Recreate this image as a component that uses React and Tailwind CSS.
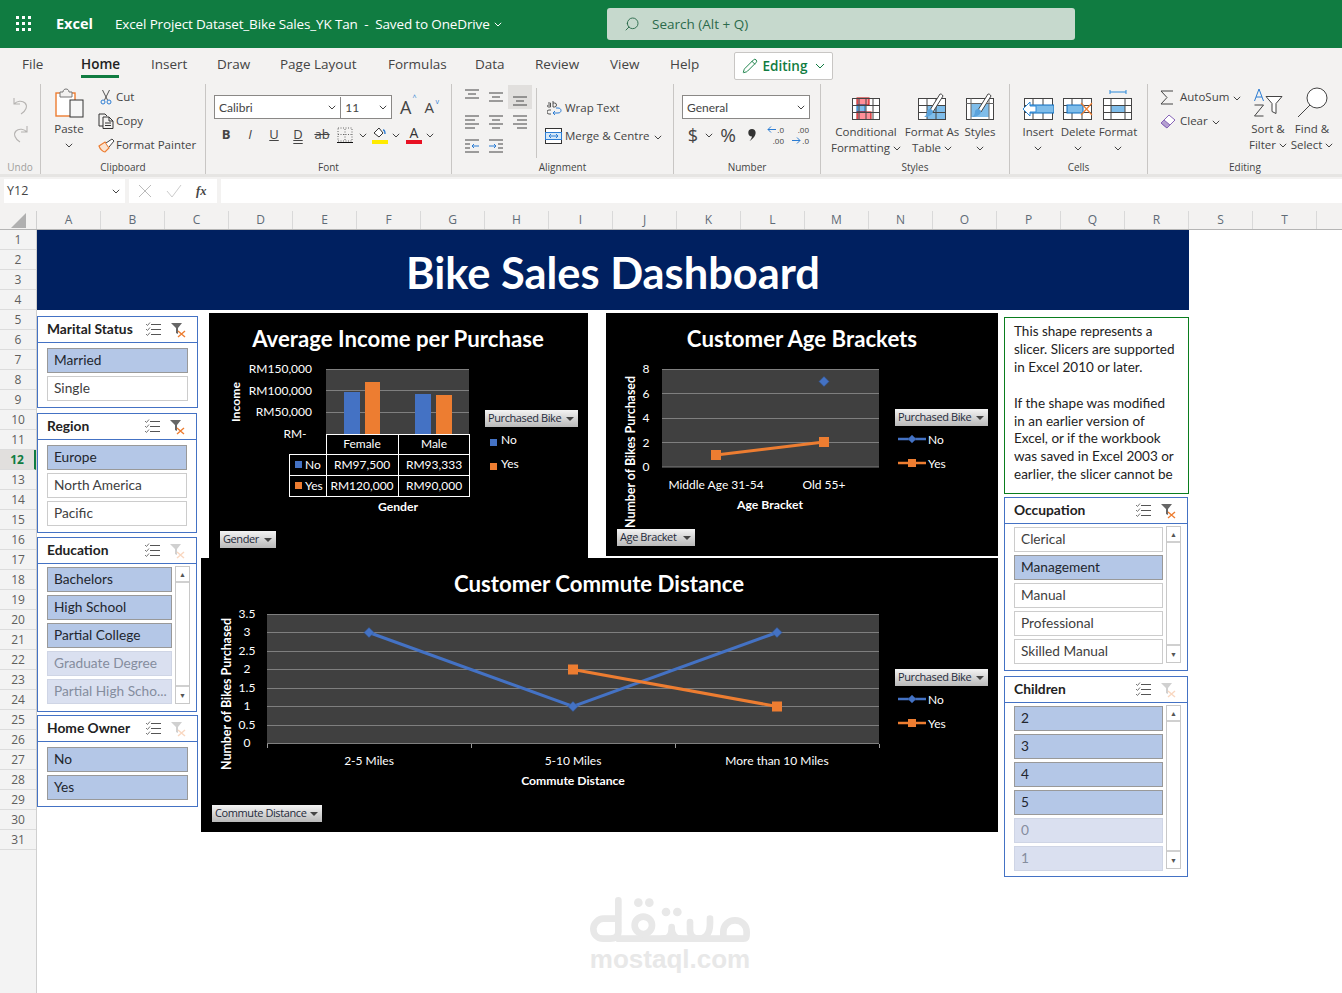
import { Search, Pencil } from "lucide-react";

const Chev = ({ c = "#444" }) => (
  <svg width="8" height="5" viewBox="0 0 8 5" className="inline-block shrink-0">
    <path d="M.8.8 4 4 7.2.8" fill="none" stroke={c} strokeWidth="1" />
  </svg>
);

const Lines = ({ rows }) => (
  <svg width="16" height="14" viewBox="0 0 16 14">
    {rows.map((r, i) => (
      <path key={i} d={`M${r[0]} ${r[2]}H${r[1]}`} stroke="#444" strokeWidth="1" />
    ))}
  </svg>
);

const UndoIcon = ({ flip }) => (
  <svg width="17" height="18" viewBox="0 0 17 18" className={flip ? "-scale-x-100" : ""}>
    <path d="M2 1v6h6M2 7c3-3 8-4 11-1 3 3 1 8-4 11" fill="none" stroke="#b5b3b1" strokeWidth="1.1" />
  </svg>
);

const PasteIcon = () => (
  <svg width="29" height="30" viewBox="0 0 29 30">
    <rect x="1" y="5" width="19" height="23" fill="#fff" stroke="#ed7d31" strokeWidth="1.4" />
    <path d="M5 9V4h3c0-4 6-4 6 0h3v5z" fill="#f3f2f1" stroke="#777" />
    <rect x="15" y="12" width="13" height="17" fill="#f7f7f7" stroke="#333" />
  </svg>
);

const CutIcon = () => (
  <svg width="12" height="16" viewBox="0 0 12 16">
    <path d="M2.5 1l5 10M9.5 1l-5 10" stroke="#555" fill="none" />
    <circle cx="3" cy="13" r="2" fill="none" stroke="#2b7cd3" />
    <circle cx="9" cy="13" r="2" fill="none" stroke="#2b7cd3" />
  </svg>
);

const CopyIcon = () => (
  <svg width="16" height="16" viewBox="0 0 16 16">
    <path d="M5 13H1V1h6l2 2M5 4h6l4 4v7.5H5zM11 4v4h4M7 10h6M7 12.5h6" fill="none" stroke="#333" />
  </svg>
);

const PainterIcon = () => (
  <svg width="17" height="15" viewBox="0 0 17 15">
    <path d="M1 8l6-4 4 6-4 4c-2 0-5-3-6-6z" fill="#fbe3d0" stroke="#ed7d31" strokeWidth="1.2" />
    <path d="M8 5l6-4 2 2-5 6" fill="#fff" stroke="#444" />
  </svg>
);

const FillIcon = () => (
  <svg width="16" height="18" viewBox="0 0 16 18">
    <path d="M2 7l5-5 4 5-4 4z" fill="#fff" stroke="#333" />
    <path d="M11 4c2 0 2 2 2 4" fill="none" stroke="#2b7cd3" strokeWidth="1.4" />
    <rect y="14" width="16" height="4" fill="#ffeb00" />
  </svg>
);

const FontColor = () => (
  <div className="flex flex-col items-center w-4">
    <span className="text-[14px] leading-[14px] text-[#333]">A</span>
    <span className="w-4 h-1 bg-[#e81123]" />
  </div>
);

const BorderIcon = () => (
  <svg width="16" height="16" viewBox="0 0 16 16">
    <rect x="1" y="1" width="14" height="13" fill="none" stroke="#666" strokeDasharray="1 1.5" />
    <path d="M8 2v12M1 7.5h14" stroke="#666" strokeDasharray="1 1.5" />
    <path d="M0 15.5h16" stroke="#111" />
  </svg>
);

const WrapIcon = () => (
  <svg width="15" height="16" viewBox="0 0 15 16" className="shrink-0">
    <path d="M1 3h2.5v4H1.5a1 1 0 0 1 0-2h2M6 1v6h1.5a1.6 1.6 0 0 0 0-4H6M4 10H2a2 2 0 0 0 0 4h2" fill="none" stroke="#444" strokeWidth=".9" />
    <path d="M6 13h5c4 0 4-5 0-5H9M8 11l-2 2 2 2" fill="none" stroke="#2b7cd3" />
  </svg>
);

const MergeIcon = () => (
  <svg width="17" height="16" viewBox="0 0 17 16">
    <rect x=".5" y=".5" width="16" height="15" fill="#fff" stroke="#333" />
    <rect x=".5" y="4.5" width="16" height="7" fill="#d5e8f8" stroke="#2b7cd3" />
    <path d="M4 8h9M6 6 4 8l2 2M11 6l2 2-2 2" fill="none" stroke="#2b7cd3" />
  </svg>
);

const GridBase = ({ children, x = 0, w = 28, h = 22, cols = 4 }) => (
  <svg width={w + 8} height={h + 12} viewBox={`-4 -10 ${w + 8} ${h + 12}`}>
    <rect x={x + 0.5} y=".5" width={w - 1} height={h - 1} fill="#fff" />
    {children}
    <rect x={x + 0.5} y=".5" width={w - 1} height={h - 1} fill="none" stroke="#444" />
    {Array.from({ length: cols - 1 }).map((_, i) => (
      <path key={i} d={`M${x + ((i + 1) * w) / cols} 0V${h}`} stroke="#444" />
    ))}
    <path d={`M${x} 7.5H${x + w}M${x} 14.5H${x + w}`} stroke="#444" />
  </svg>
);

const CondIcon = () => (
  <GridBase>
    <rect x="5" y="0" width="12" height="7" fill="#ff8f98" stroke="#c00000" />
    <rect x="5" y="7" width="8" height="7" fill="#7fbdea" stroke="#0f6cbd" />
    <rect x="5" y="14" width="14" height="7.5" fill="#ff8f98" stroke="#c00000" />
  </GridBase>
);

const Brush = ({ x = 17 }) => (
  <g transform={`translate(${x} 0)`}>
    <path d="M14-4 4 12l3 2L17-2c-1-2-2-2-3-2z" fill="#fff" stroke="#444" />
    <path d="M1 13c2-3 5-2 6 0 0 4-5 6-9 6 2-1 3-3 3-6z" fill="#5ba3dc" />
  </g>
);

const TableIcon = () => (
  <svg width="36" height="34" viewBox="-4 -10 36 34">
    <rect x=".5" y=".5" width="27" height="21" fill="#fff" />
    <rect x="9" y="7" width="18" height="14" fill="#7fbdea" />
    <rect x=".5" y=".5" width="27" height="21" fill="none" stroke="#444" />
    <path d="M9 0v22M18 0v22M0 7.5h28M0 14.5h28" stroke="#444" />
    <Brush x={8} />
  </svg>
);

const StyleIcon = () => (
  <svg width="36" height="34" viewBox="-4 -10 36 34">
    <rect x=".5" y=".5" width="27" height="21" fill="#fff" />
    <rect x="5" y="5" width="18" height="14" fill="#7fbdea" />
    <rect x=".5" y=".5" width="27" height="21" fill="none" stroke="#444" />
    <path d="M0 5.5h28M5 0v22M23 0v22" stroke="#666" />
    <Brush x={8} />
  </svg>
);

const InsertIcon = () => (
  <svg width="32" height="34" viewBox="0 -10 32 34">
    <rect x="2.5" y=".5" width="28" height="21" fill="#fff" stroke="#444" />
    <path d="M11 0v22M21 0v22M2 7.5h29M2 14.5h29" stroke="#444" />
    <rect x="8" y="7" width="24" height="8" fill="#7fbdea" stroke="#0f6cbd" />
    <path d="M8 4 1 11l7 7v-4h6V8H8z" fill="#fff" stroke="#2b88d8" />
  </svg>
);

const DeleteIcon = () => (
  <svg width="30" height="34" viewBox="0 -10 30 34">
    <rect x=".5" y=".5" width="28" height="21" fill="#fff" stroke="#444" />
    <path d="M9 0v22M19 0v22M0 7.5h29M0 14.5h29" stroke="#444" />
    <rect x="4" y="7" width="16" height="8" fill="#7fbdea" stroke="#0f6cbd" />
    <path d="M18 5l11 12M29 5 18 17" stroke="#ed7d31" strokeWidth="1.2" />
  </svg>
);

const FormatIcon = () => (
  <svg width="30" height="34" viewBox="0 -10 30 34">
    <path d="M7-6h16M7-8v4M23-8v4" stroke="#2b88d8" />
    <rect x=".5" y=".5" width="28" height="21" fill="#fff" stroke="#444" />
    <rect x="8" y="7" width="14" height="8" fill="#7fbdea" />
    <path d="M8 0v22M22 0v22M0 7.5h29M0 14.5h29" stroke="#444" />
  </svg>
);

const SumIcon = () => (
  <svg width="14" height="15" viewBox="0 0 14 15">
    <path d="M13 1H1l6 6.5L1 14h12" fill="none" stroke="#444" />
  </svg>
);

const EraserIcon = () => (
  <svg width="16" height="16" viewBox="0 0 16 16">
    <path d="M1 10 9 2l6 5-8 8z" fill="#fff" stroke="#8764b8" />
    <path d="M1 10l3-3 6 5-3 3z" fill="#b4a0d0" stroke="#8764b8" />
  </svg>
);

const SortIcon = () => (
  <svg width="30" height="30" viewBox="0 0 30 30">
    <path d="M1.5 13 6 1l4.5 12M3 9h6" fill="none" stroke="#2b7cd3" />
    <path d="M1.5 17h9l-9 11h9" fill="none" stroke="#444" />
    <path d="M13 8.5h16l-6 7v10l-4-2v-8z" fill="#fff" stroke="#444" />
  </svg>
);

const FindIcon = () => (
  <svg width="31" height="31" viewBox="0 0 31 31">
    <circle cx="20" cy="11" r="10" fill="#fff" stroke="#444" />
    <path d="M13 18 1 30" stroke="#444" />
  </svg>
);

const DecArrow = ({ flip }) => (
  <svg width="9" height="7" viewBox="0 0 9 7" className={flip ? "-scale-x-100 shrink-0" : "shrink-0"}>
    <path d="M9 3.5H1M4 .5l-3 3 3 3" fill="none" stroke="#2b7cd3" />
  </svg>
);

const Combo = ({ w, text, cls = "" }) => (
  <div className={`flex items-center justify-between pl-1 pr-1 h-full ${w} ${cls}`}>
    <span>{text}</span>
    <Chev />
  </div>
);

const Group = ({ w, label, children, muted, last }) => (
  <div className={`flex flex-col h-[90px] shrink-0 ${w} ${last ? "" : "border-r border-[#c8c6c4]"}`}>
    <div className="flex-1 flex min-h-0">{children}</div>
    <div className={`h-[14px] leading-[14px] text-center text-[10px] ${muted ? "text-[#a19f9d]" : "text-[#444]"}`}>{label}</div>
  </div>
);

const Large = ({ w, h, icon, lines, chev }) => (
  <div className={`flex flex-col items-center text-[#444] ${w}`}>
    <div className={`flex items-center justify-center ${h}`}>{icon}</div>
    {lines.map((l, i) => (
      <div key={i} className="h-4 leading-4 flex items-center gap-[3px] whitespace-nowrap">
        {l}
        {chev === i && <Chev />}
      </div>
    ))}
    {chev === lines.length && <div className="h-4 flex items-center"><Chev /></div>}
  </div>
);

const Ribbon = () => (
  <div className="flex h-[94px] pt-1 text-[11.5px] text-[#444]">
    <Group w="w-[41px]" label="Undo" muted>
      <div className="w-full flex flex-col items-center pt-[13px] gap-[10px]">
        <UndoIcon />
        <UndoIcon flip />
      </div>
    </Group>

    <Group w="w-[165px]" label="Clipboard">
      <div className="ml-[9px] w-[38px]">
        <Large w="w-full" h="h-[37px]" icon={<PasteIcon />} lines={["Paste"]} chev={1} />
      </div>
      <div className="ml-[8px] pt-[1px] flex flex-col">
        <div className="h-6 flex items-center"><div className="w-5 flex justify-center"><CutIcon /></div>Cut</div>
        <div className="h-6 flex items-center"><div className="w-5 flex justify-center"><CopyIcon /></div>Copy</div>
        <div className="h-6 flex items-center"><div className="w-5 flex justify-center"><PainterIcon /></div>Format Painter</div>
      </div>
    </Group>

    <Group w="w-[246px]" label="Font">
      <div className="pl-2 pt-[11px] flex flex-col">
        <div className="flex items-center h-6">
          <div className="flex h-6 w-[178px] bg-white border border-[#8a8886] font-[Lato,sans-serif] text-[12px] pt-[1px]">
            <Combo w="w-[127px]" text="Calibri" cls="border-r border-[#8a8886]" />
            <Combo w="w-[50px]" text="11" />
          </div>
          <span className="ml-2 text-[18px] relative">A<span className="absolute -top-[1px] -right-[5px] text-[7px] text-[#2b7cd3]">^</span></span>
          <span className="ml-[13px] text-[15px] relative">A<span className="absolute top-[1px] -right-[5px] text-[7px] text-[#2b7cd3]">v</span></span>
        </div>
        <div className="flex items-center h-[22px] mt-[5px] text-[13px]">
          <span className="w-6 text-center font-bold">B</span>
          <span className="w-6 text-center italic">I</span>
          <span className="w-6 text-center underline">U</span>
          <span className="w-6 text-center underline decoration-double">D</span>
          <span className="w-6 text-center line-through">ab</span>
          <span className="w-[22px] flex justify-center"><BorderIcon /></span>
          <span className="w-[14px] flex justify-center"><Chev /></span>
          <span className="w-5 flex justify-center"><FillIcon /></span>
          <span className="w-3 flex justify-center"><Chev /></span>
          <span className="w-6 flex justify-center"><FontColor /></span>
          <span className="w-2 flex justify-center"><Chev /></span>
        </div>
      </div>
    </Group>

    <Group w="w-[222px]" label="Alignment">
      <div className="ml-2 pt-[1px] grid grid-cols-[24px_24px_24px] grid-rows-[24px_25px_24px] h-[73px]">
        <div className="flex justify-center pt-[4px]"><Lines rows={[[1, 15, 1], [4, 12, 5], [1, 15, 9]]} /></div>
        <div className="flex justify-center pt-[7px]"><Lines rows={[[1, 15, 1], [4, 12, 5], [1, 15, 9]]} /></div>
        <div className="flex justify-center pt-[11px] bg-[#e1dfdd]"><Lines rows={[[1, 15, 1], [4, 12, 5], [1, 15, 9]]} /></div>
        <div className="flex justify-center pt-[6px]"><Lines rows={[[1, 15, 1], [1, 11, 5], [1, 15, 9], [1, 11, 13]]} /></div>
        <div className="flex justify-center pt-[6px]"><Lines rows={[[1, 15, 1], [4, 12, 5], [1, 15, 9], [4, 12, 13]]} /></div>
        <div className="flex justify-center pt-[6px]"><Lines rows={[[1, 15, 1], [5, 15, 5], [1, 15, 9], [5, 15, 13]]} /></div>
        <div className="flex justify-center pt-[5px]">
          <svg width="16" height="14" viewBox="0 0 16 14"><path d="M1 1h14M1 5h5M1 9h5M1 13h14" stroke="#444" /><path d="M15 7H8M10 5 8 7l2 2" fill="none" stroke="#2b7cd3" /></svg>
        </div>
        <div className="flex justify-center pt-[5px]">
          <svg width="16" height="14" viewBox="0 0 16 14"><path d="M1 1h14M10 5h5M10 9h5M1 13h14" stroke="#444" /><path d="M1 7h7M6 5l2 2-2 2" fill="none" stroke="#2b7cd3" /></svg>
        </div>
      </div>
      <div className="ml-1 mt-1 w-px h-[70px] bg-[#c8c6c4]" />
      <div className="ml-2 pt-3 flex flex-col gap-1">
        <div className="h-6 flex items-center pl-[2px] gap-[3px]"><WrapIcon />Wrap Text</div>
        <div className="h-6 flex items-center gap-[3px]"><MergeIcon />Merge &amp; Centre<span className="ml-[1px]"><Chev /></span></div>
      </div>
    </Group>

    <Group w="w-[147px]" label="Number">
      <div className="pl-2 pt-[11px] flex flex-col">
        <div className="h-6 w-[128px] bg-white border border-[#8a8886] font-[Lato,sans-serif] text-[12px] pt-[1px]">
          <Combo w="w-full" text="General" />
        </div>
        <div className="flex items-center h-[22px] mt-[5px]">
          <span className="w-[22px] text-center text-[18px]">$</span>
          <span className="w-[10px] flex justify-center"><Chev /></span>
          <span className="w-7 text-center text-[19px]">%</span>
          <span className="w-5 flex justify-center">
            <svg width="8" height="12" viewBox="0 0 8 12"><path d="M4 0a3.6 3.6 0 0 1 3.6 3.8C7.6 7 5 10 1.5 12 3.5 9.5 4 8 4 7.4A3.7 3.7 0 0 1 4 0z" fill="#333" /></svg>
          </span>
          <div className="ml-[1px] w-6 flex flex-col items-end text-[8px] leading-[11px] pr-[3px]">
            <div className="flex items-center gap-[1px]"><DecArrow /><span>.0</span></div>
            <span>.00</span>
          </div>
          <div className="ml-[1px] w-6 flex flex-col items-end text-[8px] leading-[11px] pr-[3px]">
            <span>.00</span>
            <div className="flex items-center gap-[1px]"><DecArrow flip /><span>.0</span></div>
          </div>
        </div>
      </div>
    </Group>

    <Group w="w-[189px]" label="Styles">
      <div className="pl-[9px] pt-[2px] flex">
        <Large w="w-[72px]" h="h-[38px]" icon={<CondIcon />} lines={["Conditional", "Formatting"]} chev={1} />
        <Large w="w-[60px]" h="h-[38px]" icon={<TableIcon />} lines={["Format As", "Table"]} chev={1} />
        <Large w="w-9" h="h-[38px]" icon={<StyleIcon />} lines={["Styles"]} chev={1} />
      </div>
    </Group>

    <Group w="w-[138px]" label="Cells">
      <div className="pl-2 pt-[2px] flex">
        <Large w="w-10" h="h-[38px]" icon={<InsertIcon />} lines={["Insert"]} chev={1} />
        <Large w="w-10" h="h-[38px]" icon={<DeleteIcon />} lines={["Delete"]} chev={1} />
        <Large w="w-10" h="h-[38px]" icon={<FormatIcon />} lines={["Format"]} chev={1} />
      </div>
    </Group>

    <Group w="flex-1" label="Editing" last>
      <div className="pl-3 flex">
        <div className="w-[86px] pt-[1px] flex flex-col">
          <div className="h-6 flex items-center"><div className="w-5"><SumIcon /></div>AutoSum<span className="ml-1"><Chev /></span></div>
          <div className="h-6 flex items-center"><div className="w-5"><EraserIcon /></div>Clear<span className="ml-1"><Chev /></span></div>
        </div>
        <Large w="w-11" h="h-[37px]" icon={<SortIcon />} lines={["Sort &", "Filter"]} chev={1} />
        <Large w="w-11" h="h-[37px]" icon={<FindIcon />} lines={["Find &", "Select"]} chev={1} />
      </div>
    </Group>
  </div>
);

const columns = "ABCDEFGHIJKLMNOPQRST".split("");
const rows = Array.from({ length: 31 }, (_, i) => i + 1);

const MultiSelect = () => (
  <svg width="16" height="15" viewBox="0 0 16 15">
    <path d="M6 2.5h10M6 7.5h10M6 12.5h10" stroke="#555" />
    <path d="M1 2l1.5 1.5L5 .5M1 7l1.5 1.5L5 5.5M1 12l1.5 1.5L5 10.5" fill="none" stroke="#777" />
  </svg>
);

const ClearFilter = ({ active }) => (
  <svg width="15" height="16" viewBox="0 0 15 16" className={active ? "" : "opacity-30"}>
    <path d="M0 1h11L7 6v6L5 11V6z" fill="#666" />
    <path d="M7 9l7 6M14 9l-7 6" stroke="#ed7d31" strokeWidth="1.4" />
  </svg>
);

const itemCls = {
  on: "bg-[#b4c7e7] border-[#999999] text-[#22262e]",
  off: "bg-white border-[#cccccc] text-[#404040]",
  dim: "bg-[#dae0f0] border-[#cfd5e5] text-[#858d9e]",
};

const Slicer = ({ title, items, size, itemW, scroll, active }) => (
  <div className={`flex flex-col bg-white border border-[#4472c4] overflow-hidden shrink-0 ${size}`}>
    <div className="flex items-center h-[26px] shrink-0 pl-[9px] border-b border-[#4472c4] font-[Lato,sans-serif] font-bold text-[13.8px] text-[#222]">
      <span className="flex-1">{title}</span>
      <MultiSelect />
      <span className="ml-[10px] mr-[11px] flex"><ClearFilter active={active} /></span>
    </div>
    <div className={`flex flex-1 min-h-0 pl-[9px] ${scroll ? "pt-[3px]" : "pt-[5px]"} font-[Lato,sans-serif] text-[13.7px]`}>
      <div className={`flex flex-col gap-[3px] shrink-0 ${itemW}`}>
        {items.map(([t, s]) => (
          <div key={t} className={`h-[25px] shrink-0 border pl-[6px] leading-[21px] whitespace-nowrap overflow-hidden ${itemCls[s]}`}>{t}</div>
        ))}
      </div>
      {scroll && (
        <div className="ml-[3px] w-[15px] h-[calc(100%-6px)] flex flex-col border border-[#c8c8c8] -mt-[1px]">
          <div className="h-4 border-b-2 border-[#d0d0d0] flex items-center justify-center text-[7px] text-[#555]">▲</div>
          <div className="flex-1" />
          <div className="h-[18px] border-t-2 border-[#d0d0d0] flex items-center justify-center text-[7px] text-[#555]">▼</div>
        </div>
      )}
    </div>
  </div>
);

const FieldBtn = ({ label, cls }) => (
  <div className={`absolute h-[17px] flex items-center justify-between px-[3px] bg-linear-to-b from-[#f4f4f4] to-[#b9b9b9] text-[11px] tracking-[-0.4px] text-[#1f2a3a] whitespace-nowrap ${cls}`}>
    {label}
    <span className="w-0 h-0 border-x-[4px] border-x-transparent border-t-[4px] border-t-[#444] mr-[1px]" />
  </div>
);

const Diamond = ({ x, y, r = 5 }) => (
  <path d={`M${x - r} ${y}L${x} ${y - r}L${x + r} ${y}L${x} ${y + r}Z`} fill="#4472c4" stroke="#2f5597" strokeWidth=".5" />
);

const Square = ({ x, y, r = 5 }) => <rect x={x - r} y={y - r} width={r * 2} height={r * 2} fill="#ed7d31" />;

const LineLegend = ({ x, y1, y2 }) => (
  <>
    <path d={`M${x} ${y1}h28`} stroke="#4472c4" strokeWidth="2.5" />
    <Diamond x={x + 14} y={y1} r={4} />
    <text x={x + 30} y={y1 + 5} fontSize="12" fill="#fff">No</text>
    <path d={`M${x} ${y2}h28`} stroke="#ed7d31" strokeWidth="2.5" />
    <Square x={x + 14} y={y2} r={4} />
    <text x={x + 30} y={y2 + 5} fontSize="12" fill="#fff">Yes</text>
  </>
);

const Title = ({ x, y, children }) => (
  <text x={x} y={y} textAnchor="middle" fontSize="22.2" fontWeight="700" fill="#fff">{children}</text>
);

const IncomeChart = () => (
  <div className="relative w-[379px] h-[245px] bg-black ml-2 shrink-0">
    <svg width="379" height="245" className="font-[Lato,sans-serif]">
      <Title x={189} y={34}>Average Income per Purchase</Title>
      <rect x="117" y="56" width="143" height="65" fill="#404040" />
      <path d="M117 56.5h143M117 77.5h143M117 99.5h143" stroke="#7f7f7f" />
      <rect x="135" y="79" width="16" height="42" fill="#4472c4" />
      <rect x="156" y="69" width="15" height="52" fill="#ed7d31" />
      <rect x="206" y="81" width="16" height="40" fill="#4472c4" />
      <rect x="227" y="82" width="16" height="39" fill="#ed7d31" />
      <g fontSize="12" fill="#fff">
        <text x="103" y="60" textAnchor="end">RM150,000</text>
        <text x="103" y="82" textAnchor="end">RM100,000</text>
        <text x="103" y="103" textAnchor="end">RM50,000</text>
        <text x="86" y="125" textAnchor="middle">RM-</text>
        <text x="153" y="135" textAnchor="middle">Female</text>
        <text x="225" y="135" textAnchor="middle">Male</text>
        <text x="96" y="156">No</text>
        <text x="153" y="156" textAnchor="middle">RM97,500</text>
        <text x="225" y="156" textAnchor="middle">RM93,333</text>
        <text x="96" y="177">Yes</text>
        <text x="153" y="177" textAnchor="middle">RM120,000</text>
        <text x="225" y="177" textAnchor="middle">RM90,000</text>
        <text x="292" y="131">No</text>
        <text x="292" y="155">Yes</text>
      </g>
      <path d="M117.5 121v62.5M189.5 121v62.5M260.5 121v62.5M80.5 141v42.5M117 121.5h144M80 141.5h181M80 162.5h181M80 183.5h181" stroke="#fff" fill="none" />
      <rect x="86" y="148" width="7" height="7" fill="#4472c4" />
      <rect x="86" y="169" width="7" height="7" fill="#ed7d31" />
      <rect x="281" y="126" width="7" height="7" fill="#4472c4" />
      <rect x="281" y="150" width="7" height="7" fill="#ed7d31" />
      <text x="189" y="198" textAnchor="middle" fontSize="12.2" fontWeight="700" fill="#fff">Gender</text>
      <text transform="translate(31 89) rotate(-90)" textAnchor="middle" fontSize="12.2" fontWeight="700" fill="#fff">Income</text>
    </svg>
    <FieldBtn label="Purchased Bike" cls="left-[276px] top-[97px] w-[93px]" />
    <FieldBtn label="Gender" cls="left-[11px] top-[218px] w-[56px]" />
  </div>
);

const AgeChart = () => (
  <div className="relative w-[392px] h-[243px] bg-black ml-[18px] shrink-0">
    <svg width="392" height="243" className="font-[Lato,sans-serif]">
      <Title x={196} y={34}>Customer Age Brackets</Title>
      <rect x="56" y="56" width="217" height="98" fill="#404040" />
      <path d="M56 56.5h217M56 80.5h217M56 105.5h217M56 129.5h217M56 154h217" stroke="#7f7f7f" />
      <path d="M110 142 218 129" stroke="#ed7d31" strokeWidth="3" />
      <Diamond x={218} y={68.5} />
      <Square x={110} y={142} />
      <Square x={218} y={129} />
      <g fontSize="12" fill="#fff">
        <text x="40" y="60" textAnchor="middle">8</text>
        <text x="40" y="85" textAnchor="middle">6</text>
        <text x="40" y="109" textAnchor="middle">4</text>
        <text x="40" y="134" textAnchor="middle">2</text>
        <text x="40" y="158" textAnchor="middle">0</text>
        <text x="110" y="176" textAnchor="middle">Middle Age 31-54</text>
        <text x="218" y="176" textAnchor="middle">Old 55+</text>
        <LineLegend x={292} y1={126} y2={150} />
      </g>
      <text x="164" y="196" textAnchor="middle" fontSize="12.2" fontWeight="700" fill="#fff">Age Bracket</text>
      <text transform="translate(29 139) rotate(-90)" textAnchor="middle" fontSize="12.4" fontWeight="700" fill="#fff">Number of Bikes Purchased</text>
    </svg>
    <FieldBtn label="Purchased Bike" cls="left-[289px] top-[96px] w-[93px]" />
    <FieldBtn label="Age Bracket" cls="left-[11px] top-[216px] w-[78px]" />
  </div>
);

const CommuteChart = () => (
  <div className="relative w-[797px] h-[274px] bg-black shrink-0">
    <svg width="797" height="274" className="font-[Lato,sans-serif]">
      <Title x={398} y={34}>Customer Commute Distance</Title>
      <rect x="66" y="56" width="612" height="130" fill="#404040" />
      <path d="M66 56.5h612M66 74.5h612M66 93.5h612M66 111.5h612M66 130.5h612M66 148.5h612M66 167.5h612M66 185.5h612" stroke="#7f7f7f" />
      <path d="M66.5 186v4M270.5 186v4M474.5 186v4M678.5 186v4" stroke="#999" />
      <path d="M168 74.5 372 148.5 576 74.5" fill="none" stroke="#4472c4" strokeWidth="3" />
      <path d="M372 111.5 576 148.5" fill="none" stroke="#ed7d31" strokeWidth="3" />
      <Diamond x={168} y={74.5} />
      <Diamond x={372} y={148.5} />
      <Diamond x={576} y={74.5} />
      <Square x={372} y={111.5} />
      <Square x={576} y={148.5} />
      <g fontSize="12" fill="#fff">
        {[["3.5", 60], ["3", 78], ["2.5", 97], ["2", 115], ["1.5", 134], ["1", 152], ["0.5", 171], ["0", 189]].map(([t, y]) => (
          <text key={t} x="46" y={y} textAnchor="middle">{t}</text>
        ))}
        <text x="168" y="207" textAnchor="middle">2-5 Miles</text>
        <text x="372" y="207" textAnchor="middle">5-10 Miles</text>
        <text x="576" y="207" textAnchor="middle">More than 10 Miles</text>
        <LineLegend x={697} y1={141} y2={165} />
      </g>
      <text x="372" y="227" textAnchor="middle" fontSize="12.2" fontWeight="700" fill="#fff">Commute Distance</text>
      <text transform="translate(30 136) rotate(-90)" textAnchor="middle" fontSize="12.4" fontWeight="700" fill="#fff">Number of Bikes Purchased</text>
    </svg>
    <FieldBtn label="Purchased Bike" cls="left-[694px] top-[111px] w-[93px]" />
    <FieldBtn label="Commute Distance" cls="left-[11px] top-[247px] w-[110px]" />
  </div>
);

const noteLines = [
  "This shape represents a",
  "slicer. Slicers are supported",
  "in Excel 2010 or later.",
  "\u00a0",
  "If the shape was modified",
  "in an earlier version of",
  "Excel, or if the workbook",
  "was saved in Excel 2003 or",
  "earlier, the slicer cannot be",
];

const Watermark = () => (
  <div className="absolute left-[590px] top-[897px] w-[160px] flex flex-col items-center text-[#e8e8e8]">
    <svg width="160" height="50" viewBox="60 55 480 150">
      <g fill="none" stroke="#e8e8e8" strokeWidth="20" strokeLinecap="round" strokeLinejoin="round">
        <path d="M145 65v95c0 12-10 20-25 20h-20c-20 0-30-15-30-30s15-30 30-30h45" />
        <path d="M145 180h375c10 0 10-5 10-20 0-20-15-35-35-35s-35 15-35 35v20" />
        <circle cx="220" cy="140" r="26" />
        <path d="M280 180c15 0 25-8 25-30M305 150v-5M305 150c0 15 10 30 25 30M360 130v25c0 15 10 25 25 25M385 180c15 0 35-8 35-45v-15" />
      </g>
      <g fill="#e8e8e8">
        <circle cx="205" cy="72" r="13" />
        <circle cx="238" cy="72" r="13" />
        <circle cx="288" cy="100" r="13" />
        <circle cx="322" cy="100" r="13" />
      </g>
    </svg>
    <div className="font-['Liberation_Sans',sans-serif] font-bold text-[26px] leading-[26px] -mt-[1px] whitespace-nowrap">mostaql.com</div>
  </div>
);

export default function App() {
  return (
    <div className="relative w-[1342px] h-[993px] overflow-hidden bg-white font-['Open_Sans',sans-serif]">
      {/* title bar */}
      <div className="flex items-center h-12 bg-[#107c41] text-white">
        <svg width="16" height="16" viewBox="0 0 16 16" className="ml-4" fill="#fff">
          {[1, 7, 13].map((y) => [1, 7, 13].map((x) => <rect key={`${x}${y}`} x={x - 1} y={y - 1} width="3" height="3" />))}
        </svg>
        <span className="ml-6 w-[59px] font-bold text-[14.5px]">Excel</span>
        <div className="w-[492px] flex items-center gap-1 text-[13.5px] tracking-[-0.15px] whitespace-nowrap">
          Excel Project Dataset_Bike Sales_YK Tan &nbsp;-&nbsp; Saved to OneDrive
          <Chev c="#fff" />
        </div>
        <div className="w-[468px] h-8 rounded-[3px] bg-[#c6d9cd] flex items-center pl-[17px] gap-3 text-[13.5px] text-[#2b6a4b]">
          <Search size={16} strokeWidth={1.4} className="-scale-x-100" />
          Search (Alt + Q)
        </div>
      </div>

      <div className="bg-[#f3f2f1]">
        {/* tabs */}
        <div className="flex items-center h-8 pl-[22px] text-[13.5px] text-[#444]">
          <div className="w-[59px]">File</div>
          <div className="w-[70px]">
            <div className="relative w-[38px] font-semibold text-[#222]">
              Home
              <div className="absolute left-0 right-0 top-[21px] h-[3px] bg-[#107c41]" />
            </div>
          </div>
          <div className="w-[66px]">Insert</div>
          <div className="w-[63px]">Draw</div>
          <div className="w-[108px]">Page Layout</div>
          <div className="w-[87px]">Formulas</div>
          <div className="w-[60px]">Data</div>
          <div className="w-[75px]">Review</div>
          <div className="w-[60px]">View</div>
          <div className="w-[64px]">Help</div>
          <div className="w-[99px] h-7 mt-1 flex items-center justify-center gap-[5px] rounded-[2px] bg-white border border-[#c8c6c4] text-[#107c41] font-semibold">
            <Pencil size={16} strokeWidth={1.4} />
            Editing
            <svg width="10" height="6" viewBox="0 0 10 6" className="ml-[3px]"><path d="M1 1l4 4 4-4" fill="none" stroke="#107c41" /></svg>
          </div>
        </div>

        <Ribbon />
        <div className="h-[3px] bg-[#e6e5e3]" />

        {/* formula bar */}
        <div className="flex h-6 pl-1 mt-[2px] gap-1 text-[12.5px] text-[#444]">
          <div className="w-[121px] bg-white flex items-center justify-between pl-[3px] pr-[5px]">Y12<Chev /></div>
          <div className="w-[88px] bg-white flex items-center pl-[9px]">
            <svg width="14" height="14" viewBox="0 0 14 14"><path d="M1 1l12 12M13 1 1 13" stroke="#bbb" /></svg>
            <svg width="16" height="14" viewBox="0 0 16 14" className="ml-[14px]"><path d="M1 7l5 6 9-12" fill="none" stroke="#ccc" /></svg>
            <span className="ml-[14px] italic font-['Liberation_Serif',serif] font-bold">fx</span>
          </div>
          <div className="flex-1 bg-white" />
        </div>

        {/* column headers */}
        <div className="flex h-[27px] pt-2 border-b border-[#b5b5b5] text-[12px] text-[#5f6b76]">
          <div className="w-[37px] flex items-center justify-center border-r border-[#d0d0d0]">
            <div className="w-0 h-0 border-l-[15px] border-l-transparent border-b-[15px] border-b-[#b0b0b0]" />
          </div>
          {columns.map((c) => (
            <div key={c} className="w-16 text-center leading-[18px] border-r border-[#d9d9d9] shrink-0">{c}</div>
          ))}
        </div>
      </div>

      {/* sheet */}
      <div className="flex">
        <div className="w-[37px] h-[763px] bg-[#f3f3f3] border-r border-[#cfcfcf] shrink-0 text-[12px] text-[#605e5c]">
          {rows.map((r) => (
            <div
              key={r}
              className={`h-5 leading-5 text-center border-b border-[#dcdcdc] ${
                r === 12 ? "bg-[#e1dfdd] font-bold text-[#107c41] border-r-2 border-r-[#107c41]" : ""
              }`}
            >
              {r}
            </div>
          ))}
        </div>

        <div className="flex-1">
          <div className="w-[1152px] h-20 pt-[5px] bg-[#002060] flex items-center justify-center font-[Lato,sans-serif] font-bold text-white text-[43.4px]">
            Bike Sales Dashboard
          </div>

          <div className="flex">
            <div className="w-[161px] pt-[6px] flex flex-col shrink-0">
              <Slicer title="Marital Status" size="w-[161px] h-[92px]" itemW="w-[141px]" active
                items={[["Married", "on"], ["Single", "off"]]} />
              <Slicer title="Region" size="w-[160px] h-[120px] mt-[5px]" itemW="w-[140px]" active
                items={[["Europe", "on"], ["North America", "off"], ["Pacific", "off"]]} />
              <Slicer title="Education" size="w-[160px] h-[175px] mt-1" itemW="w-[125px]" scroll
                items={[["Bachelors", "on"], ["High School", "on"], ["Partial College", "on"], ["Graduate Degree", "dim"], ["Partial High Scho...", "dim"]]} />
              <Slicer title="Home Owner" size="w-[161px] h-[92px] mt-[3px]" itemW="w-[141px]"
                items={[["No", "on"], ["Yes", "on"]]} />
            </div>

            <div className="ml-[3px] w-[797px] pt-[3px] shrink-0">
              <div className="flex h-[245px]">
                <IncomeChart />
                <AgeChart />
              </div>
              <CommuteChart />
            </div>

            <div className="ml-[6px] w-[185px] pt-[7px] flex flex-col shrink-0">
              <div className="h-[177px] border border-[#0a7d1e] pl-[9px] pt-[5px] font-[Lato,sans-serif] text-[13.5px] leading-[17.9px] text-[#222] overflow-hidden whitespace-nowrap">
                {noteLines.map((l, i) => <div key={i}>{l}</div>)}
              </div>
              <Slicer title="Occupation" size="w-[184px] h-[174px] mt-[3px]" itemW="w-[149px]" scroll active
                items={[["Clerical", "off"], ["Management", "on"], ["Manual", "off"], ["Professional", "off"], ["Skilled Manual", "off"]]} />
              <Slicer title="Children" size="w-[184px] h-[201px] mt-[5px]" itemW="w-[149px]" scroll
                items={[["2", "on"], ["3", "on"], ["4", "on"], ["5", "on"], ["0", "dim"], ["1", "dim"]]} />
            </div>
          </div>
        </div>
      </div>

      <Watermark />
    </div>
  );
}
